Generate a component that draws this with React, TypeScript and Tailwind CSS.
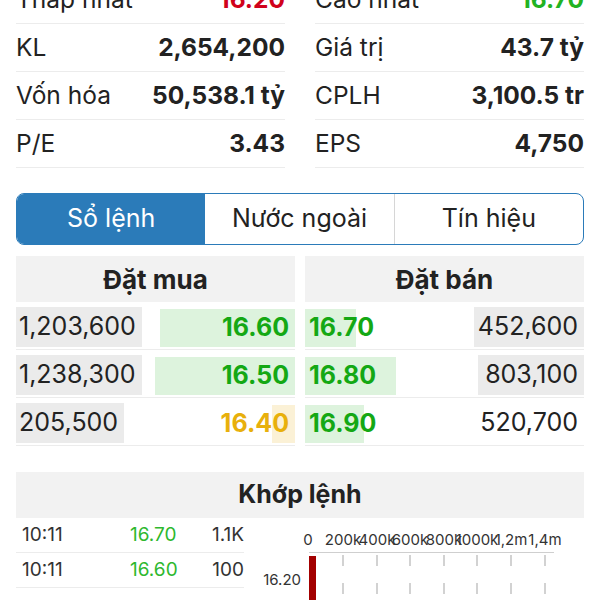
import React from 'react';

const FONT = { fontFamily: 'Inter, "Noto Sans", sans-serif' };

type Stat = { label: string; value: string; color?: string };

const leftStats: Stat[] = [
  { label: 'Thấp nhất', value: '16.20', color: 'text-[#d0021b]' },
  { label: 'KL', value: '2,654,200' },
  { label: 'Vốn hóa', value: '50,538.1 tỷ' },
  { label: 'P/E', value: '3.43' },
];

const rightStats: Stat[] = [
  { label: 'Cao nhất', value: '16.70', color: 'text-[#22b322]' },
  { label: 'Giá trị', value: '43.7 tỷ' },
  { label: 'CPLH', value: '3,100.5 tr' },
  { label: 'EPS', value: '4,750' },
];

const bids = [
  { vol: '1,203,600', volW: 126, price: '16.60', barW: 135, color: 'text-[#14a814]', bar: 'bg-[#ddf3dd]' },
  { vol: '1,238,300', volW: 126, price: '16.50', barW: 140, color: 'text-[#14a814]', bar: 'bg-[#ddf3dd]' },
  { vol: '205,500', volW: 108, price: '16.40', barW: 23, color: 'text-[#e8b00c]', bar: 'bg-[#fbf1d6]' },
];

const asks = [
  { price: '16.70', barW: 51, vol: '452,600', volW: 110 },
  { price: '16.80', barW: 91, vol: '803,100', volW: 106 },
  { price: '16.90', barW: 59, vol: '520,700', volW: 0 },
];

const trades = [
  { time: '10:11', price: '16.70', vol: '1.1K' },
  { time: '10:11', price: '16.60', vol: '100' },
];

const StatColumn = ({ items }: { items: Stat[] }) => (
  <div className="flex flex-col">
    {items.map((s) => (
      <div key={s.label} className="h-[48px] flex items-center justify-between border-b border-[#ececec] text-[24.5px] text-[#222]">
        <span>{s.label}</span>
        <span className={`font-bold ${s.color ?? ''}`}>{s.value}</span>
      </div>
    ))}
  </div>
);

// biểu đồ khớp lệnh theo giá
const MatchChart = () => {
  const ticks = [83, 117, 150, 184, 217, 251, 285];
  const labels = ['200k', '400k', '600k', '800k', '1000k', '1,2m', '1,4m'];
  return (
    <svg width="324" height="82" viewBox="0 0 324 82" className="block">
      <g fontFamily="Inter, 'Noto Sans', sans-serif" fontSize="15" fill="#333">
        <text x="48" y="27" textAnchor="middle">0</text>
        {labels.map((l, i) => (
          <text key={l} x={ticks[i]} y="27" textAnchor="middle">{l}</text>
        ))}
        <text x="41" y="67" textAnchor="end">16.20</text>
      </g>
      <line x1="49" y1="34.5" x2="294" y2="34.5" stroke="#cfcfcf" strokeWidth="1" />
      {ticks.map((x) => (
        <line key={x} x1={x} y1="37" x2={x} y2="82" stroke="#c4c4c4" strokeWidth="1.5" strokeDasharray="11 17" />
      ))}
      <rect x="49" y="38" width="7" height="44" fill="#a30000" />
    </svg>
  );
};

export default function App() {
  return (
    <div className="w-[600px] h-[600px] overflow-hidden bg-white px-4" style={FONT}>
      {/* --- Thống kê --- */}
      <div className="-mt-[24px] grid grid-cols-2 gap-x-[30px]">
        <StatColumn items={leftStats} />
        <StatColumn items={rightStats} />
      </div>

      {/* --- Tabs --- */}
      <div className="mt-[25px] h-[52px] flex rounded-[8px] border border-[#2b7bb9] overflow-hidden text-[25px] text-[#222]">
        <div className="flex-1 flex items-center justify-center bg-[#2b7bb9] text-white">Sổ lệnh</div>
        <div className="flex-1 flex items-center justify-center">Nước ngoài</div>
        <div className="flex-1 flex items-center justify-center border-l border-[#d6d6d6]">Tín hiệu</div>
      </div>

      {/* --- Sổ lệnh --- */}
      <div className="mt-[11px] grid grid-cols-2 gap-x-[10px]">
        <div className="flex flex-col">
          <div className="h-[46px] bg-[#f2f2f2] flex items-center justify-center text-[26px] font-bold text-[#222]">Đặt mua</div>
          {bids.map((b) => (
            <div key={b.price} className="h-[48px] flex items-end pb-[2px] justify-between border-b border-[#ececec]">
              <div className="h-[40px] flex items-center bg-[#ebebeb] pl-[3px] text-[25px] text-[#222] whitespace-nowrap" style={{ width: b.volW }}>
                {b.vol}
              </div>
              <div className="relative h-[38px] flex items-center justify-end">
                <div className={`absolute right-0 top-0 bottom-0 ${b.bar}`} style={{ width: b.barW }} />
                <span className={`relative pr-[6px] text-[25px] font-bold ${b.color}`}>{b.price}</span>
              </div>
            </div>
          ))}
        </div>
        <div className="flex flex-col">
          <div className="h-[46px] bg-[#f2f2f2] flex items-center justify-center text-[26px] font-bold text-[#222]">Đặt bán</div>
          {asks.map((a) => (
            <div key={a.price} className="h-[48px] flex items-end pb-[2px] justify-between border-b border-[#ececec]">
              <div className="relative h-[38px] flex items-center">
                <div className="absolute left-0 top-0 bottom-0 bg-[#ddf3dd]" style={{ width: a.barW }} />
                <span className="relative pl-[4px] text-[25px] font-bold text-[#14a814]">{a.price}</span>
              </div>
              <div
                className={`h-[40px] flex items-center justify-end pr-[6px] text-[25px] text-[#222] ${a.volW ? 'bg-[#ebebeb]' : ''}`}
                style={{ width: a.volW || undefined }}
              >
                {a.vol}
              </div>
            </div>
          ))}
        </div>
      </div>

      {/* --- Khớp lệnh --- */}
      <div className="mt-[26px] h-[46px] bg-[#f2f2f2] flex items-center justify-center text-[25px] font-bold text-[#222]">
        Khớp lệnh
      </div>
      <div className="flex">
        <div className="w-[244px] flex flex-col">
          {trades.map((t, i) => (
            <div key={i} className="h-[35px] flex items-center border-b border-[#ececec] text-[19px] text-[#333]">
              <span className="w-[114px] pl-[6px]">{t.time}</span>
              <span className="w-[80px] text-[#2eb82e]">{t.price}</span>
              <span className="flex-1 text-right">{t.vol}</span>
            </div>
          ))}
        </div>
        <div className="ml-[16px]">
          <MatchChart />
        </div>
      </div>
    </div>
  );
}
